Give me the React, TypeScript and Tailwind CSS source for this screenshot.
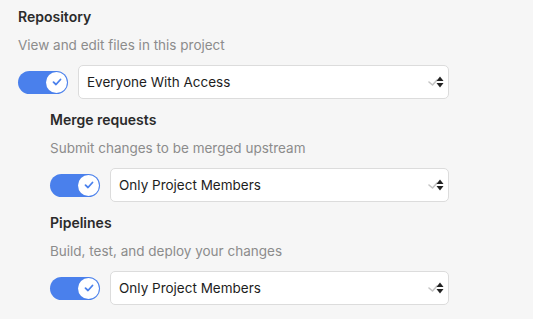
import React from "react";

type Section = {
  title: string;
  desc: string;
  value: string;
};

function Toggle() {
  return (
    <div className="flex h-[23px] w-[50px] shrink-0 items-center justify-end rounded-full bg-[#4a80ec] pr-[1px]">
      <div className="flex h-[21px] w-[21px] items-center justify-center rounded-full bg-white">
        <svg width="10" height="8" viewBox="0 0 10 8" fill="none">
          <path d="M1.5 4.2 L4 6.5 L8.5 1.5" stroke="#4a80ec" strokeWidth="1.8" strokeLinecap="round" strokeLinejoin="round" />
        </svg>
      </div>
    </div>
  );
}

function SelectArrow() {
  return (
    <svg width="17" height="16" viewBox="0 0 17 16" fill="none">
      <path d="M1 8 L4.5 11 L9 6" stroke="#c4c4c4" strokeWidth="1.6" strokeLinecap="round" strokeLinejoin="round" />
      <path d="M8.5 7 L12 2.5 L15.5 7 Z" fill="#222" />
      <path d="M8.5 9 L12 13.5 L15.5 9 Z" fill="#222" />
    </svg>
  );
}

function Row({ value }: { value: string }) {
  return (
    <div className="flex items-center gap-[10px]">
      <Toggle />
      <div className="flex h-[34px] flex-1 items-center justify-between rounded-[5px] border border-[#dcdcdc] bg-white pl-[8px] pr-[3px]">
        <span className="text-[13.5px] text-[#1d1d1d]">{value}</span>
        <SelectArrow />
      </div>
    </div>
  );
}

function Block({ s }: { s: Section }) {
  return (
    <div>
      <h3 className="text-[14px] font-semibold leading-[20px] text-[#2b2b2b]">{s.title}</h3>
      <p className="mt-[8px] text-[13.5px] leading-[20px] text-[#8c8c8c]">{s.desc}</p>
      <div className="mt-[10px]">
        <Row value={s.value} />
      </div>
    </div>
  );
}

export default function App() {
  const repo: Section = {
    title: "Repository",
    desc: "View and edit files in this project",
    value: "Everyone With Access",
  };
  const nested: Section[] = [
    { title: "Merge requests", desc: "Submit changes to be merged upstream", value: "Only Project Members" },
    { title: "Pipelines", desc: "Build, test, and deploy your changes", value: "Only Project Members" },
  ];
  return (
    <div className="h-[319px] w-[533px] bg-[#f6f6f6] pl-[18px] pt-[7px] font-['Inter',sans-serif]">
      <div className="w-[431px]">
        <Block s={repo} />
        <div className="pl-[32px]">
          {nested.map((s) => (
            <div key={s.title} className="mt-[11px]">
              <Block s={s} />
            </div>
          ))}
        </div>
      </div>
    </div>
  );
}
